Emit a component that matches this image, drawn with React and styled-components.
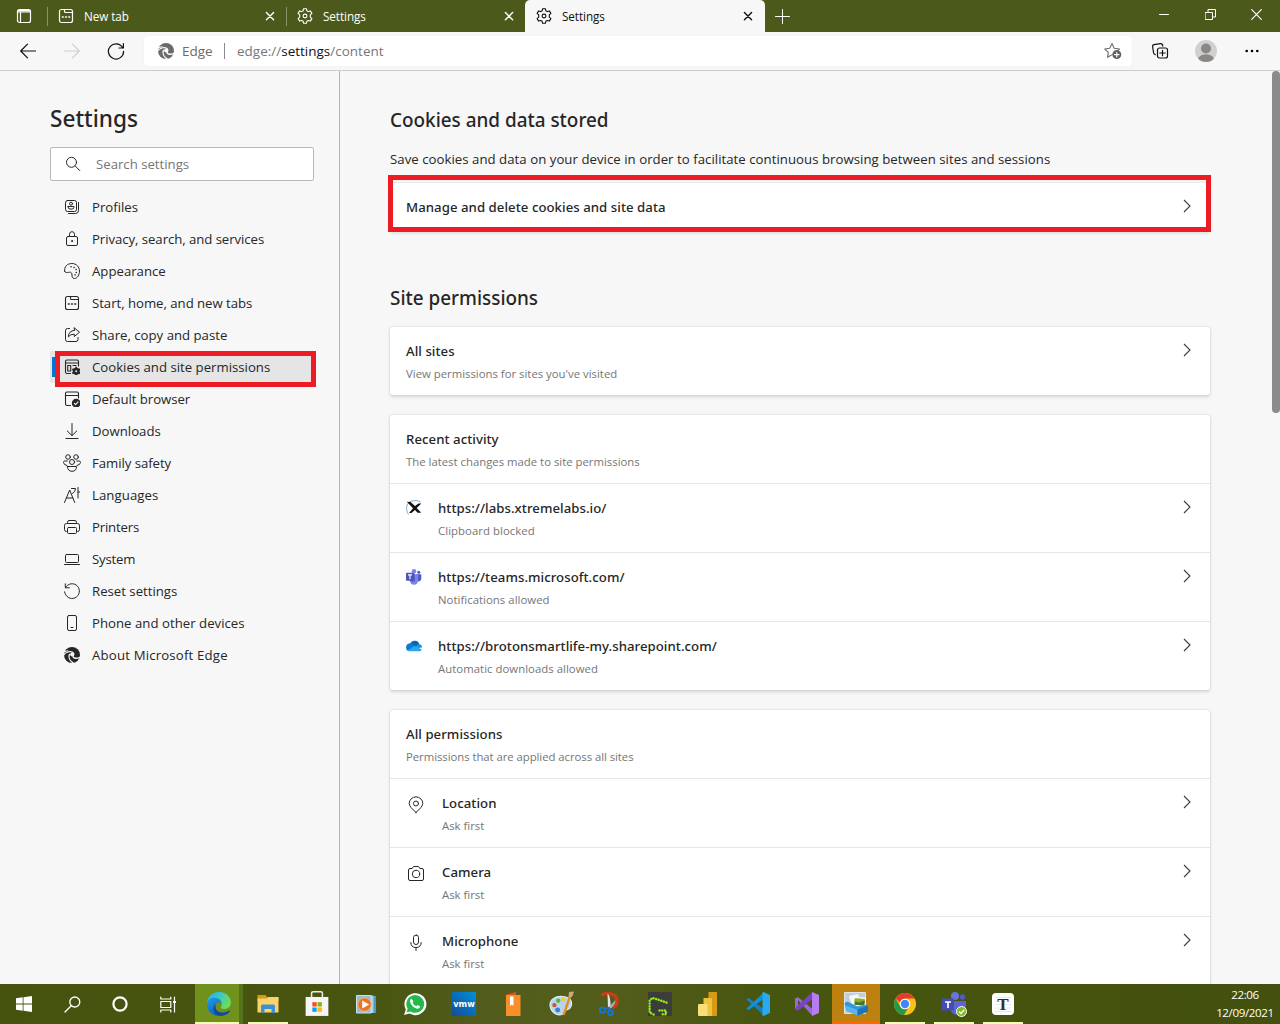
import React from 'react';
import styled, { createGlobalStyle, css } from 'styled-components';

const sans = '"Open Sans", "Noto Sans", sans-serif';
const semi = '"Noto Sans", "Open Sans", sans-serif';
const ink = '#262626';

const GlobalStyle = createGlobalStyle`
  * { box-sizing: border-box; }
  body { margin: 0; overflow: hidden; background: #f7f7f7; color: ${ink}; font-family: ${sans}; }
  h1, h2, p, ul { margin: 0; padding: 0; }
  svg { display: block; flex: none; }
`;

const Screen = styled.div`
  width: 1280px;
  height: 1024px;
  display: flex;
  flex-direction: column;
  overflow: hidden;
`;

/* ---------- icons ---------- */
const Line = ({ size = 16, w = 1, color = 'currentColor', children, box = 16 }) => (
  <svg width={size} height={size} viewBox={`0 0 ${box} ${box}`} fill="none" stroke={color} strokeWidth={w} strokeLinecap="round" strokeLinejoin="round">
    {children}
  </svg>
);

const Gear = () => (
  <Line w={1.1}>
    <path d="M6.6.7h2.800l.5 2.100 1.300.8 2.100-.7 1.600 2.500-1.600 1.500v2.200l1.600 1.500-1.600 2.500-2.100-.7-1.300.8-.5 2.100H6.600l-.5-2.100-1.300-.8-2.100.7-1.600-2.500 1.600-1.500V6.900L1.100 5.400l1.600-2.500 2.100.7 1.300-.8z" />
    <circle cx="8" cy="8" r="1.900" />
  </Line>
);
const NewTabIcon = ({ w = 1.2 }) => (
  <Line w={w}>
    <rect x="1.500" y="1.500" width="13" height="13" rx="2" />
    <path d="M6.500 1.500v2q0 1 1 1h7" />
    <path d="M4.400 9h.8M7.600 9h.8M10.800 9h.8" strokeWidth="1.600" />
  </Line>
);
const CloseIcon = () => <Line size={10} box={10} w={1.4}><path d="M1.400 1.600l7.200 7.200M8.600 1.600L1.400 8.800" /></Line>;

const EdgeMono = ({ bg = '#f7f7f7' }) => (
  <svg width="16" height="16" viewBox="0 0 16 16">
    <circle cx="8" cy="8" r="8" fill="currentColor" />
    <g fill="none" stroke={bg} strokeLinecap="round">
      <path d="M0 5.200Q1.500 3.800 4 3.700" strokeWidth="1.100" />
      <path d="M-.2 8C1.500 5 6 3.800 8.600 5.300 10 6.200 10.100 7.500 9.400 8.700" strokeWidth="1.200" />
      <path d="M5.400 7.400C4.300 10.300 5.800 14 9.600 16.200" strokeWidth="1.300" />
      <path d="M9.200 8.400C8.300 11 11.500 12.200 16 10.300" strokeWidth="1.400" />
    </g>
    <circle cx="7.900" cy="7.600" r="1.800" fill={bg} />
  </svg>
);

const icons = {
  profiles: (
    <Line>
      <rect x="1.500" y="1.500" width="11" height="11" rx="2" />
      <circle cx="7" cy="4.700" r="1.500" /><path d="M4 7.500h6v.7q0 2-3 2t-3-2z" />
      <path d="M14.500 3.500v8q0 3-3 3h-7" />
    </Line>
  ),
  lock: <Line><rect x="2.500" y="5.500" width="11" height="9" rx="1.500" /><path d="M5.500 5.500V3.200q0-2.500 2.500-2.500t2.500 2.500v2.300" /><circle cx="8" cy="10" r=".5" fill="currentColor" /></Line>,
  palette: (
    <Line>
      <path d="M.7 8.200C-.2 3.500 3.500.5 7.900.5c4.600 0 7.600 3.500 7.600 7.500 0 3.600-2 7.500-5 7.500-2.400 0-2.500-2-2.500-3.500 0-1.800-.8-3-2.600-2.800C3.700 9.400 1.200 10.500.7 8.200z" />
      <path d="M7 3.700h.1M10 4.400h.1M12 6.600h.1M12.200 9.500h.1M11 12h.1" strokeWidth="1.500" />
    </Line>
  ),
  start: <NewTabIcon w={1.1} />,
  share: <Line><path d="M5.500 1.500H3.500q-2 0-2 2v9q0 2 2 2h8.500q2 0 2-2v-2" /><path d="M10.300.9l5.200 4.300-5.200 4.300V7.200Q6.500 7 4.300 9.800 4.600 3.900 10.300 3.400z" /></Line>,
  cookies: (
    <Line w={1.1}>
      <path d="M6.500 14.500H3q-1.500 0-1.500-1.500V2.500Q1.500 1 3 1h10q1.500 0 1.500 1.500V7M1.500 4h13" />
      <path d="M3.700 6.500h3v5.500h-3zM9 6.500h3" />
      <circle cx="12.200" cy="12.200" r="3" fill="currentColor" />
      <path d="M12.200 8.500v7.400M9 10.350l6.400 3.700M15.400 10.350l-6.400 3.700" strokeWidth="1.800" />
      <circle cx="12.200" cy="12.200" r="1" fill="#e5e5e5" stroke="none" />
    </Line>
  ),
  browser: (
    <Line w={1.1}>
      <path d="M6.500 14.500H3q-1.500 0-1.500-1.500V2.500Q1.500 1 3 1h10q1.500 0 1.500 1.500V7M1.500 4.500h13" />
      <circle cx="12.200" cy="12.200" r="3.800" fill="currentColor" />
      <path d="M10.300 12.300l1.300 1.300 2.500-2.700" stroke="#f7f7f7" />
    </Line>
  ),
  download: <Line><path d="M8 .5v12M3.300 8L8 12.600 12.700 8M2 15.500h12" /></Line>,
  family: (
    <Line size={18} box={18}>
      <circle cx="5" cy="3" r="2.300" /><circle cx="13" cy="3" r="2.300" /><circle cx="9" cy="8" r="2.500" />
      <path d="M4.300 7H1.700Q.5 7 .5 8.500.7 11 4 11.500M13.700 7h2.600q1.200 0 1.200 1.500-.2 2.500-3.500 3" />
      <path d="M4.500 12.500h9q0 4.800-4.500 4.800t-4.500-4.800z" />
    </Line>
  ),
  languages: <Line><path d="M.5 15.500L5.700 3l5 12.500M2.500 11h6.300M7.500 1.500h4q0 3.500-3 5M14 .5V11M14 5h1.800" /></Line>,
  printer: <Line><path d="M3.500 12.500h-1q-2 0-2-2v-4q0-2 2-2h11q2 0 2 2v4q0 2-2 2h-1M3.500 4.500v-1q0-2 1.500-2h6q1.500 0 1.500 2v1" /><rect x="3.500" y="8.500" width="9" height="6" rx="1" /></Line>,
  system: <Line><rect x="1.500" y="3.500" width="13" height="8" rx="1" /><path d="M.5 13.500h15" /></Line>,
  reset: <Line><path d="M1.500 4.500A7.400 7.400 0 1 1 .6 8.800M1.300.8v4h4" /></Line>,
  phone: <Line><rect x="3.500" y=".5" width="9" height="15" rx="1.500" /><path d="M7 12.500h2" /></Line>,
  edge: <EdgeMono />,
  location: <Line size={18} box={18}><path d="M9 16.400Q2.200 10.800 2.200 7.400a6.800 6.500 0 0 1 13.600 0Q15.800 10.800 9 16.400z" /><circle cx="9" cy="7.500" r="2.500" /></Line>,
  camera: <Line size={18} box={18}><path d="M3 3.500h2.200l1.300-2h5l1.300 2H15q1.500 0 1.500 1.500v9q0 1.500-1.500 1.500H3q-1.500 0-1.500-1.500V5Q1.500 3.500 3 3.500z" /><circle cx="9" cy="9" r="3.700" /></Line>,
  mic: <Line size={18} box={18}><rect x="6.500" y="1" width="5" height="9.500" rx="2.500" /><path d="M3.800 8.500q0 5 5.200 5t5.200-5M9 13.500v3" /></Line>,
};

const XtremeLogo = () => (
  <svg width="16" height="16" viewBox="0 0 16 16" fill="none">
    <path d="M2.500 14.500C-1 9 .5 3 5 1.300 8 .3 12 .2 14.500 2" stroke="#6d9fd2" strokeWidth=".9" />
    <path d="M.8 1.800L4.500 2l4.500 4L12.500 3.500h2.800L10.700 8l4.500 4.800h-3.600L9 10l-3.500 3H3l4-4.800z" fill="#111" />
  </svg>
);
const TeamsLogo = ({ size = 16 }) => (
  <svg width={size} height={size} viewBox="0 0 16 16">
    <circle cx="12.800" cy="3.300" r="1.500" fill="#5059c9" />
    <path d="M10 5.300h5.300v4.500q-.4 2.700-3 2.700-2.300 0-2.300-3z" fill="#5059c9" />
    <circle cx="8" cy="2.300" r="2.300" fill="#7b83eb" />
    <path d="M4 5.300h8v6.200q-.3 4.200-4 4.200t-4-4.200z" fill="#7b83eb" />
    <path d="M5.700 4.500h3.200v8H4z" fill="#3d46a5" opacity=".6" />
    <rect x="0" y="3.800" width="8" height="8" rx=".7" fill="#4b53bc" />
    <path d="M2 5.900h4M4 5.900v4.300" stroke="#fff" strokeWidth="1.100" />
  </svg>
);
const OneDriveLogo = () => (
  <svg width="16" height="16" viewBox="0 0 16 16">
    <path d="M4 6Q5.700 2.500 9.200 2.700q3.300.2 4 3.300L9 9.500z" fill="#0364b8" />
    <path d="M.1 9.600Q.1 5.800 4 5.300q2.500-.2 5 2.200L3 13.200Q.2 13 .1 9.600z" fill="#0f78d4" />
    <path d="M9 8l4.200-2q2.800.6 2.800 3.400L12 10z" fill="#1490df" />
    <path d="M1.500 12.300L9 8l6.800 3.400q-.7 1.900-2.600 1.900H3q-1 0-1.500-1z" fill="#28a8ea" />
  </svg>
);

/* ---------- tab strip ---------- */
const TabStrip = styled.header`
  height: 32px;
  flex: none;
  display: flex;
  align-items: stretch;
  background: #4b5a1b;
  color: #fff;
`;
const TabActions = styled.div`
  width: 47px;
  padding-left: 1px;
  display: flex;
  align-items: center;
  justify-content: center;
`;
const Tab = styled.div`
  width: ${(p) => (p.$active ? 240 : 239)}px;
  display: flex;
  align-items: center;
  padding: 0 11px;
  font-size: 11.7px;
  line-height: 16px;
  position: relative;
  svg:first-child { margin-right: 10px; }
  ${(p) => p.$active && css`
    background: #f7f7f7;
    color: #111;
    border-radius: 5px 5px 0 0;
    padding-right: 12px;
  `}
  ${(p) => p.$divided && css`
    &::before { content: ''; position: absolute; left: 0; top: 7px; width: 1px; height: 19px; background: #8a9467; }
  `}
`;
const TabTitle = styled.span`
  flex: 1;
  margin-top: -1px;
  letter-spacing: -.07px;
`;
const NewTabButton = styled.div`
  width: 36px;
  padding-right: 1px;
  display: flex;
  align-items: center;
  justify-content: center;
`;
const WindowControls = styled.div`
  margin-left: auto;
  display: grid;
  grid-template-columns: repeat(3, 46px);
  height: 28px;
  align-items: center;
  justify-items: center;
  padding-right: 1px;
`;

/* ---------- toolbar ---------- */
const Toolbar = styled.div`
  height: 39px;
  flex: none;
  display: flex;
  align-items: center;
  padding-left: 6px;
  background: #f7f7f7;
  border-bottom: 1px solid #cdcdcd;
  color: #111;
`;
const NavButton = styled.div`
  width: 44px;
  display: flex;
  justify-content: center;
  color: ${(p) => (p.$disabled ? '#cfcfcf' : '#111')};
`;
const AddressBar = styled.div`
  width: 988px;
  height: 30px;
  margin: 0 5px 0 6px;
  padding: 0 10px 0 14px;
  display: flex;
  align-items: center;
  background: #fff;
  border-radius: 4px;
  box-shadow: 0 0 2px rgba(0, 0, 0, .06);
  color: #6b6b6b;
  font-size: 13.5px;
`;
const SiteLabel = styled.span`
  width: 43px;
  margin-left: 8px;
  border-right: 1px solid #8a8a8a;
  line-height: 16px;
`;
const Url = styled.span`
  flex: 1;
  margin-left: 12px;
  color: #767676;
  b { font-weight: 400; color: #111; }
`;
const ToolButton = styled.div`
  width: 46px;
  display: flex;
  justify-content: center;
`;

/* ---------- page ---------- */
const Page = styled.div`
  height: 913px;
  flex: none;
  display: flex;
  overflow: hidden;
`;
const Sidebar = styled.nav`
  width: 340px;
  padding: 32px 25px 0 50px;
  border-right: 1px solid #b4b4b4;
`;
const PageTitle = styled.h1`
  font: 500 22.6px/32px ${semi};
`;
const SearchBox = styled.div`
  height: 34px;
  margin: 12px 0 10px;
  padding-left: 14px;
  display: flex;
  align-items: center;
  gap: 15px;
  background: #fff;
  border: 1px solid #bababa;
  border-radius: 2px;
  color: #767676;
  font-size: 13.2px;
  svg { color: ${ink}; }
`;
const NavList = styled.ul`list-style: none;`;
const NavItem = styled.li`
  height: 32px;
  display: flex;
  align-items: center;
  gap: 11px;
  padding-left: 13px;
  font-size: 13.2px;
  border-radius: 2px;
  position: relative;
  letter-spacing: ${(p) => p.$track || 0}px;
  ${(p) => p.$selected && css`
    background: #e5e5e5;
    &::before { content: ''; position: absolute; left: 2px; top: 6px; width: 4px; height: 20px; background: #0078d4; }
  `}
`;
const NavIcon = styled.span`
  width: 18px;
  display: flex;
  justify-content: center;
`;
const Highlight = styled.span`
  position: absolute;
  border: 5px solid #ed1c24;
  ${(p) => (p.$nav
    ? css`left: 5px; right: -2px; top: 0; height: 36px;`
    : css`left: -2px; right: -1px; top: -8px; height: 57px;`)}
`;

const Main = styled.main`
  width: 932px;
  padding: 35px 62px 0 50px;
`;
const SectionTitle = styled.h2`
  font: 500 18.9px/28px ${semi};
  margin-bottom: ${(p) => p.$gap}px;
`;
const Intro = styled.p`
  margin-bottom: 14px;
  font-size: 13.2px;
  line-height: 20px;
  letter-spacing: .04px;
`;
const Card = styled.section`
  position: relative;
  background: #fff;
  border-radius: 3px;
  box-shadow: 0 1.6px 3.6px rgba(0, 0, 0, .13), 0 0 2px rgba(0, 0, 0, .13);
  margin-bottom: ${(p) => p.$after || 20}px;
`;
const Row = styled.div`
  display: flex;
  align-items: flex-start;
  padding: 14px 16px 0;
  box-sizing: content-box;
  height: ${(p) => (p.$compact ? 34 : 54)}px;
  & + & { border-top: 1px solid #e6e6e6; }
`;
const RowIcon = styled.span`
  display: flex;
  width: ${(p) => (p.$wide ? 36 : 32)}px;
  padding: ${(p) => (p.$wide ? '3px 0 0 1px' : '2px 0 0 0')};
`;
const RowText = styled.div`flex: 1;`;
const RowTitle = styled.div`
  font: 500 13.2px/20px ${semi};
  letter-spacing: .05px;
`;
const RowNote = styled.div`
  font-size: 11.35px;
  line-height: 16px;
  margin-top: 5px;
  color: #767676;
  letter-spacing: ${(p) => p.$track || 0}px;
`;
const RowChevron = styled.span`
  padding-top: 2px;
  margin-right: 3px;
`;
const ScrollTrack = styled.div`width: 8px;`;
const ScrollThumb = styled.div`
  height: 342px;
  border-radius: 4px;
  background: #8b8b8b;
`;

/* ---------- taskbar ---------- */
const Taskbar = styled.footer`
  height: 40px;
  flex: none;
  display: flex;
  background: linear-gradient(90deg, #46530f 0%, #47550f 28%, #525c1c 38%, #535d1b 48%, #47560f 60%, #43500e 100%);
  color: #fff;
`;
const SystemButtons = styled.div`
  display: grid;
  grid-template-columns: repeat(4, 48px);
  align-items: center;
  justify-items: center;
  margin-right: 3px;
`;
const AppSlot = styled.div`
  width: 49px;
  padding-right: 2px;
  display: flex;
  align-items: center;
  justify-content: center;
  position: relative;
  background: ${(p) => p.$bg || 'none'};
  ${(p) => p.$running && css`
    &::after { content: ''; position: absolute; bottom: 0; left: ${p.$full ? 0 : 4}px; width: ${p.$full ? (p.$bar ? 48 : 44) : 40}px; height: 2px; background: ${p.$bar || '#f0ffb0'}; }
  `}
`;
const Clock = styled.div`
  width: 70px;
  margin-left: auto;
  display: flex;
  flex-direction: column;
  align-items: center;
  padding-top: 2px;
  font-size: 11.6px;
  line-height: 18px;
  letter-spacing: -.38px;
`;

const Svg24 = ({ children, s = 24 }) => <svg width={s} height={s} viewBox="0 0 24 24">{children}</svg>;

const EdgeApp = () => (
  <Svg24 s={26}>
    <defs>
      <linearGradient id="ea" x1="0" y1="0" x2="1" y2=".4"><stop offset="0" stopColor="#2aa9e8" /><stop offset=".5" stopColor="#35c6d3" /><stop offset="1" stopColor="#6bdc5c" /></linearGradient>
      <linearGradient id="eb" x1="0" y1="0" x2=".5" y2="1"><stop offset="0" stopColor="#1e9de5" /><stop offset="1" stopColor="#0f62bd" /></linearGradient>
    </defs>
    <path d="M1 11C1.500 5 6 1 12 1c6.500 0 11 4.500 11 9.500 0 4-3 6-6 6-2.500 0-4-1-3-2.500 1.500-2 .5-5.500-3.500-6C6 7.500 2 9 1 13z" fill="url(#ea)" />
    <path d="M1 13C1 8 5.500 5.700 9.500 6.500c3 .6 4.700 2.500 4.700 4.500C13 9.800 9 10 8.500 14c-.3 4 2.500 8 6 8.600C7 24.500 1 19 1 13z" fill="url(#eb)" />
    <path d="M9 12c-1.500 5 2.500 8.300 7 7.800 3-.3 5-1.600 5.800-1.800.6 0 .3.800-.2 1.400C19 22.800 13.500 24 10 22c-4-2.500-3.800-8-1-10z" fill="#114a9b" />
  </Svg24>
);
const FolderApp = () => (
  <Svg24><path d="M1.500 3h8l1.500 2h11q.5 0 .5.500V9h-21z" fill="#d99a16" /><path d="M1.500 6.500h9.500l1.500-1.500h10v15.500h-21z" fill="#fcd36a" /><path d="M5 21v-7q0-1.500 1.500-1.500h11q1.500 0 1.500 1.500v7h-3.500v-4h-7v4z" fill="#3b8fd4" /></Svg24>
);
const StoreApp = () => (
  <Svg24 s={26}><path d="M7 6.500V2Q7 .700 8.500.700h7Q17 .700 17 2v4.500" fill="none" stroke="#ececec" strokeWidth="1.400" /><path d="M1.500 5.500h21V23h-21z" fill="#f5f5f5" /><path d="M7.700 10.300h4v4h-4z" fill="#f25022" /><path d="M12.500 10.300h4v4h-4z" fill="#7fba00" /><path d="M7.700 15.200h4v4h-4z" fill="#00a4ef" /><path d="M12.500 15.200h4v4h-4z" fill="#ffb900" /></Svg24>
);
const MediaApp = () => (
  <Svg24><path d="M8 4h14v17H8z" fill="#4d9cc0" /><path d="M4 3.500h15.500v17.500H4z" fill="#a9d2e4" /><path d="M2.500 3.500H17V21H2.500z" fill="#8fbfd6" stroke="#c9e3ee" /><circle cx="10.500" cy="12.500" r="6.800" fill="#ee7420" stroke="#fbb77e" /><path d="M8.200 8.500l7 4-7 4z" fill="#fff" /></Svg24>
);
const WhatsappApp = () => (
  <Svg24><path d="M1 23l1.800-5.500A11 11 0 1 1 6.600 21.500z" fill="#fff" /><path d="M3.500 20.500l1.200-3.800A8.900 8.900 0 1 1 7.500 19.500z" fill="#25b94d" /><path d="M8.300 6.700q-1.800 1-1.200 3.300 1.700 5.200 7 6.700 2.500.2 3.100-2.300l-2.600-1.500-1.300 1.300q-2.700-1.100-3.800-3.700l1-1.300z" fill="#fff" /></Svg24>
);
const VmwApp = () => (
  <Svg24><defs><linearGradient id="vm" x1="0" y1="1" x2="1" y2="0"><stop stopColor="#154a99" /><stop offset="1" stopColor="#0091d8" /></linearGradient></defs><path d="M0 0h24v24H0z" fill="url(#vm)" /><text x="12" y="14.800" textAnchor="middle" fontFamily="DejaVu Sans" fontSize="9" fontWeight="700" textLength="21.500" lengthAdjust="spacingAndGlyphs" fill="#fff">vmw</text></Svg24>
);
const BookApp = () => (
  <Svg24><path d="M5 2.500L15 0v4H5z" fill="#d9431e" /><path d="M5 3h14.500v21H5z" fill="#f78f2b" /><path d="M5 3L15 .2V3z" fill="#e2541f" /><path d="M9 4.500h3.500V14l-1.700-1.500L9 14z" fill="#fff" /></Svg24>
);
const PaintApp = () => (
  <Svg24 s={26}><path d="M1 14C0 8 6 4.500 12.500 5 19 5.300 22 9 20.500 14c-1 3-3 3-4.500 3.500-2 .5-1 3-3.500 4C7 23.500 2 19.500 1 14z" fill="#b5d6ea" stroke="#e0eff8" /><circle cx="5" cy="13" r="2" fill="#de4b34" /><circle cx="8.500" cy="9" r="2" fill="#5db43d" /><circle cx="13" cy="8" r="1.700" fill="#f7c92d" /><circle cx="8" cy="17.500" r="2.300" fill="#3d81c9" /><path d="M13.500 22L19.500 4.500" stroke="#e88b24" strokeWidth="2.200" /><path d="M18 5l.5-4L23 .5 22 4l-2 2.500z" fill="#c9aa7d" /></Svg24>
);
const SnipApp = () => (
  <Svg24><path d="M2.500 3.500Q6 .800 10.500 1.600q8 1.400 7.500 8.400-.4 4.500-4.500 5.500" fill="none" stroke="#cf3b16" strokeWidth="3.400" /><path d="M9 16L8.500 1.500Q11.500 3 11.800 16z" fill="#e3e6e8" /><path d="M10 15l6.500-7q.5 3.500-4.500 8.500z" fill="#aab0b4" /><circle cx="3.500" cy="18" r="2.600" fill="none" stroke="#1576d1" strokeWidth="2" /><circle cx="11.500" cy="20.700" r="2.400" fill="none" stroke="#1576d1" strokeWidth="2" /><path d="M6 17l4-1.500 1 3" fill="none" stroke="#1576d1" strokeWidth="1.600" /></Svg24>
);
const GreenshotApp = () => (
  <Svg24><path d="M0 0h24v24H0z" fill="#3c3c3b" /><g fill="none" stroke="#91ea12" strokeWidth="2.500" strokeLinecap="round" strokeDasharray=".01 2.700"><path d="M18.500 10.500L4.500 5.800 1.600 8.500V20.500l5 2.500" /><path d="M11.500 18.500h6.500v3.800h-4" /></g></Svg24>
);
const PowerBiApp = () => (
  <Svg24><path d="M11.500 0H19q1 0 1 1v22q0 1-1 1h-7.500z" fill="#d89b17" /><path d="M6.500 6H14q1 0 1 1v17H6.500z" fill="#eec33b" /><path d="M2 12h7.500q1 0 1 1v11H2q-1 0-1-1V13q0-1 1-1z" fill="#f8df79" /></Svg24>
);
const CodeApp = () => (
  <Svg24><path d="M.5 7.500l2-1.700L17.500 17v6z" fill="#1480c4" /><path d="M.5 16.500l2 1.700L17.500 7V.800z" fill="#1090d8" /><path d="M17.500 0L24 3v18l-6.500 3-1-.6V.6z" fill="#29a9ef" /></Svg24>
);
const StudioApp = () => (
  <Svg24><path d="M0 6.500l3-1.300L17.500 17v7L3 8v8.500L0 17.500z" fill="#9a6ad9" /><path d="M0 17.500l3 1.300L17.500 7V0L1 15z" fill="#7a45bf" /><path d="M17 0l7 3v18l-7 3z" fill="#b77cf0" /></Svg24>
);
const PhotoApp = () => (
  <Svg24><path d="M.5.500h21v21H.5z" fill="#c3cfd5" stroke="#dde5e8" /><path d="M5 4l9-2 3 10-9 3z" fill="#f3f7f8" /><path d="M10 5.500l11.500.8-.8 8-11-1z" fill="#8eac37" stroke="#fff" strokeWidth="1.200" /><path d="M10.800 9.500l4 1 6-2-.4 5-9.600-.8z" fill="#4f7424" /><path d="M.5 11l3-1.500 10 5L24 12.500v7L14 23.500 2.500 19z" fill="#3298de" /><path d="M2 13.500l11.500 4.500V23.500L2.500 19z" fill="#5bb4ec" /><path d="M13.500 17.500L24 13.500v6l-10.500 4z" fill="#1b72bd" /></Svg24>
);
const ChromeApp = () => (
  <Svg24><circle cx="12" cy="12" r="11" fill="#fbc116" /><path d="M2.500 6.500A11 11 0 0 1 21.500 6.500H12q-4 0-5 4z" fill="#e33b2e" /><path d="M2.500 6.500A11 11 0 0 0 11 23l5-8.500-4 2.500q-3.500 0-5-3z" fill="#229a4b" /><circle cx="12" cy="12" r="5.300" fill="#fff" /><circle cx="12" cy="12" r="4.200" fill="#4285f4" /></Svg24>
);
const TeamsApp = () => (
  <svg width="26" height="26" viewBox="0 0 26 26"><circle cx="14" cy="5" r="4" fill="#6b73db" /><circle cx="21.500" cy="6" r="2.700" fill="#5059c9" /><path d="M9 10h16v7q-2 6-8 7-6 0-8-6z" fill="#5c65d0" /><path d="M1 7.500h12v12H1z" fill="#454db5" /><path d="M4 11h6M7 11v6" stroke="#fff" strokeWidth="1.700" /><circle cx="20.500" cy="20.500" r="5" fill="#7fba22" stroke="#fff" /><path d="M18 20.500l2 2 3.200-3.700" stroke="#fff" strokeWidth="1.400" fill="none" /></svg>
);
const TyporaApp = () => (
  <Svg24><rect x="1" y="1" width="22" height="22" rx="4" fill="#fff" /><path d="M4 5.500h16M4 9h16M4 12.500h16M4 16h16M4 19.500h16" stroke="#e8e8e8" /><text x="12" y="17.500" textAnchor="middle" fontFamily="Liberation Serif" fontSize="17" fontWeight="700" fill="#2d2d2d">T</text></Svg24>
);

const navItems = [
  ['profiles', 'Profiles'],
  ['lock', 'Privacy, search, and services', -0.06],
  ['palette', 'Appearance'],
  ['start', 'Start, home, and new tabs', -0.03],
  ['share', 'Share, copy and paste'],
  ['cookies', 'Cookies and site permissions'],
  ['browser', 'Default browser', -0.06],
  ['download', 'Downloads'],
  ['family', 'Family safety', -0.05],
  ['languages', 'Languages', 0.08],
  ['printer', 'Printers', -0.18],
  ['system', 'System', -0.18],
  ['reset', 'Reset settings'],
  ['phone', 'Phone and other devices', 0.02],
  ['edge', 'About Microsoft Edge', 0.18],
];
const apps = [
  [FolderApp, true], [StoreApp], [MediaApp], [WhatsappApp], [VmwApp], [BookApp], [PaintApp], [SnipApp],
  [GreenshotApp], [PowerBiApp], [CodeApp], [StudioApp],
];

const Chevron = () => (
  <RowChevron><svg width="8" height="14" viewBox="0 0 8 14" fill="none" stroke="#3c3c3c" strokeWidth="1.1"><path d="M1 1l6 6-6 6" /></svg></RowChevron>
);
const SettingRow = ({ icon, wide, title, note, link, compact, track }) => (
  <Row $compact={compact}>
    {icon && <RowIcon $wide={wide}>{icon}</RowIcon>}
    <RowText>
      <RowTitle>{title}</RowTitle>
      {note && <RowNote $track={track}>{note}</RowNote>}
    </RowText>
    {link && <Chevron />}
  </Row>
);

export default function App() {
  return (
    <Screen>
      <GlobalStyle />
      <TabStrip>
        <TabActions><Line w={1.2}><rect x="1.500" y="1.500" width="13" height="13" rx="2" /><path d="M2 2.700h12M2 4h12M4.500 4v10" /></Line></TabActions>
        <Tab $divided><NewTabIcon /><TabTitle>New tab</TabTitle><CloseIcon /></Tab>
        <Tab $divided><Gear /><TabTitle>Settings</TabTitle><CloseIcon /></Tab>
        <Tab $active><Gear /><TabTitle>Settings</TabTitle><CloseIcon /></Tab>
        <NewTabButton><Line size={15} box={15}><path d="M7.500.5v14M.5 7.500h14" /></Line></NewTabButton>
        <WindowControls>
          <Line size={10} box={10}><path d="M.5 5.500h9" /></Line>
          <Line size={11} box={11}><path d="M.5 3.500h7v7h-7zM3 3V.5h7.500V8H8" /></Line>
          <Line size={11} box={11} w={1.2}><path d="M.7.7l9.600 9.600M10.300.7L.7 10.300" /></Line>
        </WindowControls>
      </TabStrip>
      <Toolbar>
        <NavButton><Line w={1.2}><path d="M15.500 8H.8M7.500 1.200L.7 8l6.800 6.800" /></Line></NavButton>
        <NavButton $disabled><Line w={1.2}><path d="M.5 8h14.700M8.500 1.200L15.300 8l-6.800 6.800" /></Line></NavButton>
        <NavButton><Line size={18} box={18} w={1.2}><path d="M15.800 6A7.600 7.600 0 1 0 16.600 9.300M16.400 1.500V6H12" /></Line></NavButton>
        <AddressBar>
          <EdgeMono bg="#fff" />
          <SiteLabel>Edge</SiteLabel>
          <Url>edge://<b>settings</b>/content</Url>
          <Line size={18} box={18} w={1.1}>
            <path d="M7.500 13l-4 2.300.8-5L.8 7l4.900-.7L8 1.500l2.200 4.800 5.300.7-2 1.700" />
            <circle cx="12.800" cy="12.600" r="4.500" fill="#5f5f5f" stroke="none" />
            <path d="M12.800 10.300v4.600M10.500 12.600h4.600" stroke="#fff" />
          </Line>
        </AddressBar>
        <ToolButton>
          <Line size={18} box={18} w={1.2}>
            <path d="M4.300 12.600Q2.700 12.400 2.500 10.500L1.600 4.500Q1.400 3 3 2.700L9.500 1.700Q11.500 1.600 11.800 4" />
            <rect x="6.500" y="6" width="10" height="10" rx="2" /><path d="M11.500 8.300v5.400M8.800 11h5.400" />
          </Line>
        </ToolButton>
        <ToolButton>
          <svg width="22" height="22" viewBox="0 0 22 22">
            <clipPath id="av"><circle cx="11" cy="11" r="11" /></clipPath>
            <g clipPath="url(#av)"><path d="M0 0h22v22H0z" fill="#d2d0ce" /><circle cx="11" cy="8.500" r="5" fill="#8a8886" /><ellipse cx="11" cy="19.500" rx="8" ry="5.200" fill="#8a8886" /></g>
          </svg>
        </ToolButton>
        <ToolButton><svg width="14" height="4" viewBox="0 0 14 4"><circle cx="1.700" cy="2" r="1.300" /><circle cx="7" cy="2" r="1.300" /><circle cx="12.300" cy="2" r="1.300" /></svg></ToolButton>
      </Toolbar>
      <Page>
        <Sidebar>
          <PageTitle>Settings</PageTitle>
          <SearchBox><Line><circle cx="6.500" cy="6.300" r="5" /><path d="M10.200 10l4.600 4.600" /></Line>Search settings</SearchBox>
          <NavList>
            {navItems.map(([icon, label, track]) => (
              <NavItem key={icon} $track={track} $selected={icon === 'cookies'}>
                <NavIcon>{icons[icon]}</NavIcon>{label}
                {icon === 'cookies' && <Highlight $nav />}
              </NavItem>
            ))}
          </NavList>
        </Sidebar>
        <Main>
          <SectionTitle $gap={15}>Cookies and data stored</SectionTitle>
          <Intro>Save cookies and data on your device in order to facilitate continuous browsing between sites and sessions</Intro>
          <Card $after={53}>
            <SettingRow compact link title="Manage and delete cookies and site data" />
            <Highlight />
          </Card>
          <SectionTitle $gap={15}>Site permissions</SectionTitle>
          <Card><SettingRow link title="All sites" note="View permissions for sites you've visited" /></Card>
          <Card>
            <SettingRow title="Recent activity" note="The latest changes made to site permissions" />
            <SettingRow link icon={<XtremeLogo />} title="https://labs.xtremelabs.io/" note="Clipboard blocked" track={0.06} />
            <SettingRow link icon={<TeamsLogo />} title="https://teams.microsoft.com/" note="Notifications allowed" track={0.04} />
            <SettingRow link icon={<OneDriveLogo />} title="https://brotonsmartlife-my.sharepoint.com/" note="Automatic downloads allowed" track={0.04} />
          </Card>
          <Card>
            <SettingRow title="All permissions" note="Permissions that are applied across all sites" track={-0.05} />
            <SettingRow link wide icon={icons.location} title="Location" note="Ask first" />
            <SettingRow link wide icon={icons.camera} title="Camera" note="Ask first" />
            <SettingRow link wide icon={icons.mic} title="Microphone" note="Ask first" />
          </Card>
        </Main>
        <ScrollTrack><ScrollThumb /></ScrollTrack>
      </Page>
      <Taskbar>
        <SystemButtons>
          <svg width="16" height="16" viewBox="0 0 16 16" fill="#fff"><path d="M0 2.300l6.700-1v6.300H0zM7.500 1.200L16 0v7.600H7.500zM0 8.400h6.700v6.300l-6.700-1zM7.500 8.400H16V16l-8.500-1.200z" /></svg>
          <Line size={17} box={17} w={1.3}><circle cx="10.800" cy="6" r="5" /><path d="M7.200 9.800L1 16" /></Line>
          <Line w={2.2}><circle cx="8" cy="8" r="6.600" /></Line>
          <Line size={17} box={17} w={1.2}><path d="M.8 1v2h10V1M.8 5.500h10v6H.8zM.8 16v-2h10v2M14.500 1v15" /><path d="M14.500 5v2" strokeWidth="3" strokeLinecap="butt" /></Line>
        </SystemButtons>
        <AppSlot $running $full $bg="linear-gradient(90deg, #71911d 44px, #55731a 44px, #55731a 48px, transparent 48px)"><EdgeApp /></AppSlot>
        {apps.map(([Icon, running], i) => <AppSlot key={i} $running={running}><Icon /></AppSlot>)}
        <AppSlot $running $full $bar="#ff6a00" $bg="linear-gradient(90deg, #bd8110 48px, transparent 48px)"><PhotoApp /></AppSlot>
        <AppSlot $running><ChromeApp /></AppSlot>
        <AppSlot $running><TeamsApp /></AppSlot>
        <AppSlot $running><TyporaApp /></AppSlot>
        <Clock><span>22:06</span><span>12/09/2021</span></Clock>
      </Taskbar>
    </Screen>
  );
}
